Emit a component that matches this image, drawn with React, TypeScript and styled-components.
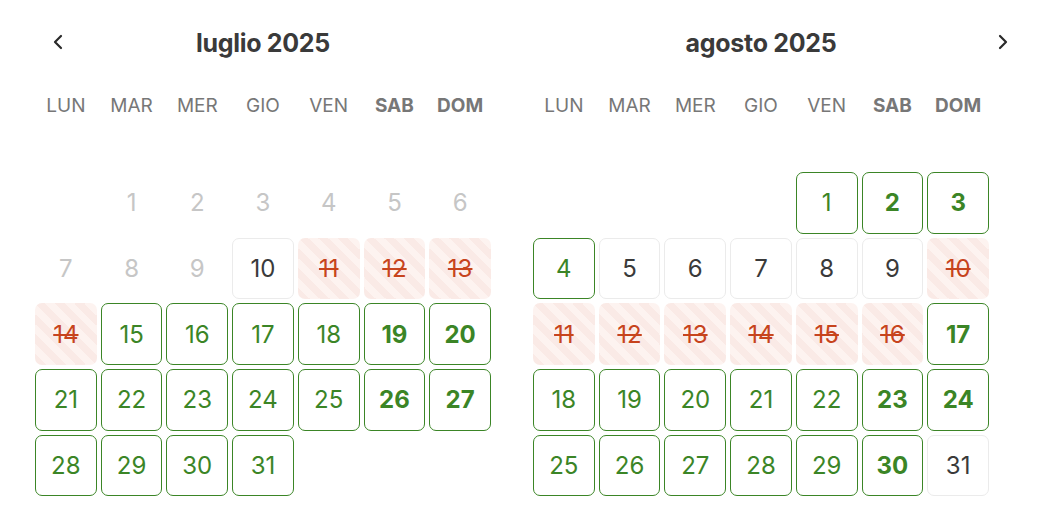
import React from "react";
import styled, { createGlobalStyle, css } from "styled-components";

const Global = createGlobalStyle`
  html, body { margin: 0; padding: 0; background: #fff; }
  body { font-family: Inter, "Noto Sans", Arial, sans-serif; -webkit-font-smoothing: antialiased; }
  * { box-sizing: border-box; }
`;

type DayState = "past" | "plain" | "blocked" | "free";

const GREEN = "#3b8526";
const RED = "#c7441d";

const Page = styled.div`
  position: relative;
  width: 1046px;
  height: 524px;
  padding: 24px 0 0 35px;
  display: flex;
  gap: 42px;
`;

const Month = styled.section`
  width: 456px;
  display: flex;
  flex-direction: column;
`;

const Title = styled.h2`
  margin: 0;
  height: 38px;
  line-height: 38px;
  text-align: center;
  font-size: 25px;
  font-weight: 700;
  color: #3a3a3a;
  letter-spacing: -0.3px;
`;

const Weekdays = styled.div`
  margin-top: 33px;
  display: grid;
  grid-template-columns: repeat(7, 1fr);
  column-gap: 4px;
  height: 22px;
`;

const Weekday = styled.div<{ $weekend?: boolean }>`
  text-align: center;
  font-size: 19px;
  line-height: 22px;
  color: #777;
  font-weight: ${(p) => (p.$weekend ? 700 : 400)};
`;

const Days = styled.div`
  margin-top: 55px;
  display: grid;
  grid-template-columns: repeat(7, 1fr);
  grid-auto-rows: 61.7px;
  gap: 4px;
`;

const Day = styled.div<{ $state: DayState; $weekend?: boolean }>`
  display: flex;
  align-items: center;
  justify-content: center;
  border-radius: 7px;
  font-size: 24px;
  border: 1px solid transparent;
  color: #333;
  ${(p) =>
    p.$state === "past" &&
    css`
      color: #c6c6c6;
    `}
  ${(p) =>
    p.$state === "plain" &&
    css`
      border-color: #ebebeb;
      color: #3a3a3a;
    `}
  ${(p) =>
    p.$state === "free" &&
    css`
      border-color: ${GREEN};
      color: ${GREEN};
      font-weight: ${p.$weekend ? 700 : 400};
    `}
  ${(p) =>
    p.$state === "blocked" &&
    css`
      color: ${RED};
      text-decoration: line-through;
      text-decoration-thickness: 2px;
      background: repeating-linear-gradient(
        45deg,
        #faeae6 0px,
        #faeae6 7px,
        #fdf3f0 7px,
        #fdf3f0 14px
      );
    `}
`;

const NavButton = styled.button<{ $side: "left" | "right" }>`
  position: absolute;
  top: 33px;
  ${(p) => (p.$side === "left" ? "left: 51px;" : "left: 996px;")}
  width: 14px;
  height: 18px;
  padding: 0;
  border: none;
  background: none;
  color: #2a2a2a;
  display: flex;
  align-items: center;
  justify-content: center;
  cursor: pointer;
`;

const Chevron = ({ dir }: { dir: "left" | "right" }) => (
  <svg width="12" height="16" viewBox="0 0 12 16" fill="none">
    <path
      d={dir === "left" ? "M9 2 L3 8 L9 14" : "M3 2 L9 8 L3 14"}
      stroke="currentColor"
      strokeWidth="2.2"
      strokeLinecap="round"
      strokeLinejoin="round"
    />
  </svg>
);

const WEEKDAYS = ["LUN", "MAR", "MER", "GIO", "VEN", "SAB", "DOM"];

type MonthSpec = {
  title: string;
  offset: number;
  days: number;
  state: (d: number) => DayState;
};

const july: MonthSpec = {
  title: "luglio 2025",
  offset: 1,
  days: 31,
  state: (d) => (d <= 9 ? "past" : d === 10 ? "plain" : d <= 14 ? "blocked" : "free"),
};

const august: MonthSpec = {
  title: "agosto 2025",
  offset: 4,
  days: 31,
  state: (d) =>
    d === 31
      ? "plain"
      : d <= 4
      ? "free"
      : d <= 9
      ? "plain"
      : d <= 16
      ? "blocked"
      : "free",
};

const MonthView = ({ spec }: { spec: MonthSpec }) => {
  const cells: React.ReactNode[] = [];
  for (let i = 0; i < spec.offset; i++) cells.push(<div key={"e" + i} />);
  for (let d = 1; d <= spec.days; d++) {
    const col = (spec.offset + d - 1) % 7;
    cells.push(
      <Day key={d} $state={spec.state(d)} $weekend={col >= 5}>
        {d}
      </Day>
    );
  }
  return (
    <Month>
      <Title>{spec.title}</Title>
      <Weekdays>
        {WEEKDAYS.map((w, i) => (
          <Weekday key={w} $weekend={i >= 5}>
            {w}
          </Weekday>
        ))}
      </Weekdays>
      <Days>{cells}</Days>
    </Month>
  );
};

export default function App() {
  return (
    <>
      <Global />
      <Page>
        <NavButton $side="left" aria-label="Mese precedente">
          <Chevron dir="left" />
        </NavButton>
        <MonthView spec={july} />
        <MonthView spec={august} />
        <NavButton $side="right" aria-label="Mese successivo">
          <Chevron dir="right" />
        </NavButton>
      </Page>
    </>
  );
}
